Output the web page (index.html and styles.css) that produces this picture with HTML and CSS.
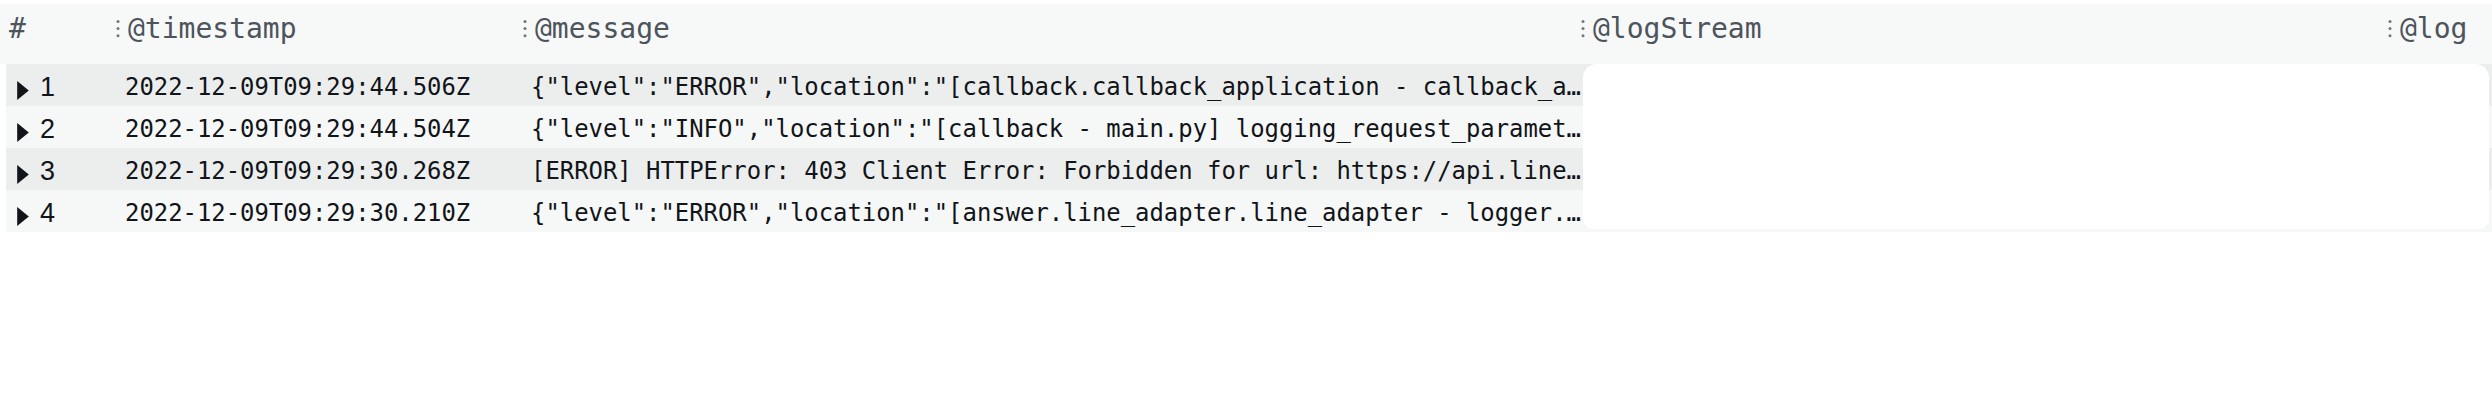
FILE: index.html
```html
<!DOCTYPE html>
<html lang="en">
<head>
<meta charset="utf-8">
<title>Log results</title>
<link rel="stylesheet" href="styles.css">
</head>
<body>
<div class="results">
  <div class="thead">
    <div class="th th-index">#</div>
    <div class="th"><svg class="grip" viewBox="0 0 4 18"><circle cx="2" cy="1.6" r="1.5"/><circle cx="2" cy="8.6" r="1.5"/><circle cx="2" cy="15.8" r="1.5"/></svg><span>@timestamp</span></div>
    <div class="th"><svg class="grip" viewBox="0 0 4 18"><circle cx="2" cy="1.6" r="1.5"/><circle cx="2" cy="8.6" r="1.5"/><circle cx="2" cy="15.8" r="1.5"/></svg><span>@message</span></div>
    <div class="th"><svg class="grip" viewBox="0 0 4 18"><circle cx="2" cy="1.6" r="1.5"/><circle cx="2" cy="8.6" r="1.5"/><circle cx="2" cy="15.8" r="1.5"/></svg><span>@logStream</span></div>
    <div class="th"><svg class="grip" viewBox="0 0 4 18"><circle cx="2" cy="1.6" r="1.5"/><circle cx="2" cy="8.6" r="1.5"/><circle cx="2" cy="15.8" r="1.5"/></svg><span>@log</span></div>
  </div>
  <div class="tbody">
    <div class="tr odd">
      <div class="td td-index"><svg class="caret" viewBox="0 0 11 18"><polygon points="0,0 11,9 0,18"/></svg><span class="num">1</span></div>
      <div class="td">2022-12-09T09:29:44.506Z</div>
      <div class="td td-msg">{"level":"ERROR","location":"[callback.callback_application - callback_a…</div>
      <div class="td"></div>
      <div class="td"></div>
    </div>
    <div class="tr even">
      <div class="td td-index"><svg class="caret" viewBox="0 0 11 18"><polygon points="0,0 11,9 0,18"/></svg><span class="num">2</span></div>
      <div class="td">2022-12-09T09:29:44.504Z</div>
      <div class="td td-msg">{"level":"INFO","location":"[callback - main.py] logging_request_paramet…</div>
      <div class="td"></div>
      <div class="td"></div>
    </div>
    <div class="tr odd">
      <div class="td td-index"><svg class="caret" viewBox="0 0 11 18"><polygon points="0,0 11,9 0,18"/></svg><span class="num">3</span></div>
      <div class="td">2022-12-09T09:29:30.268Z</div>
      <div class="td td-msg">[ERROR] HTTPError: 403 Client Error: Forbidden for url: https://api.line…</div>
      <div class="td"></div>
      <div class="td"></div>
    </div>
    <div class="tr even">
      <div class="td td-index"><svg class="caret" viewBox="0 0 11 18"><polygon points="0,0 11,9 0,18"/></svg><span class="num">4</span></div>
      <div class="td">2022-12-09T09:29:30.210Z</div>
      <div class="td td-msg">{"level":"ERROR","location":"[answer.line_adapter.line_adapter - logger.…</div>
      <div class="td"></div>
      <div class="td"></div>
    </div>
    <div class="blank-card"></div>
  </div>
</div>
</body>
</html>
```
FILE: styles.css
```css
html, body {
  margin: 0;
  padding: 0;
  background: #ffffff;
}

body {
  font-family: "DejaVu Sans Mono", "Liberation Mono", monospace;
}

.results {
  padding-top: 4px;
}

.thead {
  display: grid;
  grid-template-columns: 114px 407px 1058px 807px 1fr;
  height: 60px;
  background: #f7f8f8;
}

.th {
  display: flex;
  align-items: flex-start;
  padding-top: 8px;
  padding-left: 2px;
  font-size: 28px;
  line-height: 34px;
  color: #4d545c;
  white-space: nowrap;
}

.th-index {
  padding-left: 9px;
}

.grip {
  width: 4px;
  height: 18px;
  margin-top: 8px;
  margin-right: 8px;
  fill: #6f797a;
  flex: none;
}

.tbody {
  position: relative;
  padding-left: 6px;
}

.tr {
  display: grid;
  grid-template-columns: 108px 407px 1075px 790px 1fr;
  height: 42px;
  box-sizing: border-box;
  padding-top: 6px;
  font-size: 23.9px;
  line-height: 34px;
  color: #111418;
}

.tr.odd {
  background: #eceeee;
}

.tr.even {
  background: #f6f7f7;
}

.td {
  display: flex;
  align-items: flex-start;
  padding-left: 11px;
  white-space: nowrap;
  overflow: hidden;
}

.td-msg {
  padding-left: 10px;
}

.caret {
  width: 12px;
  height: 19px;
  margin-top: 11px;
  margin-right: 11px;
  fill: #111418;
  flex: none;
}

.num {
  font-family: "Liberation Sans", Arial, sans-serif;
  font-size: 27px;
}

.blank-card {
  position: absolute;
  left: 1583px;
  right: 3px;
  top: 0;
  bottom: 3px;
  background: #ffffff;
  border-radius: 14px 14px 10px 10px;
}
```
